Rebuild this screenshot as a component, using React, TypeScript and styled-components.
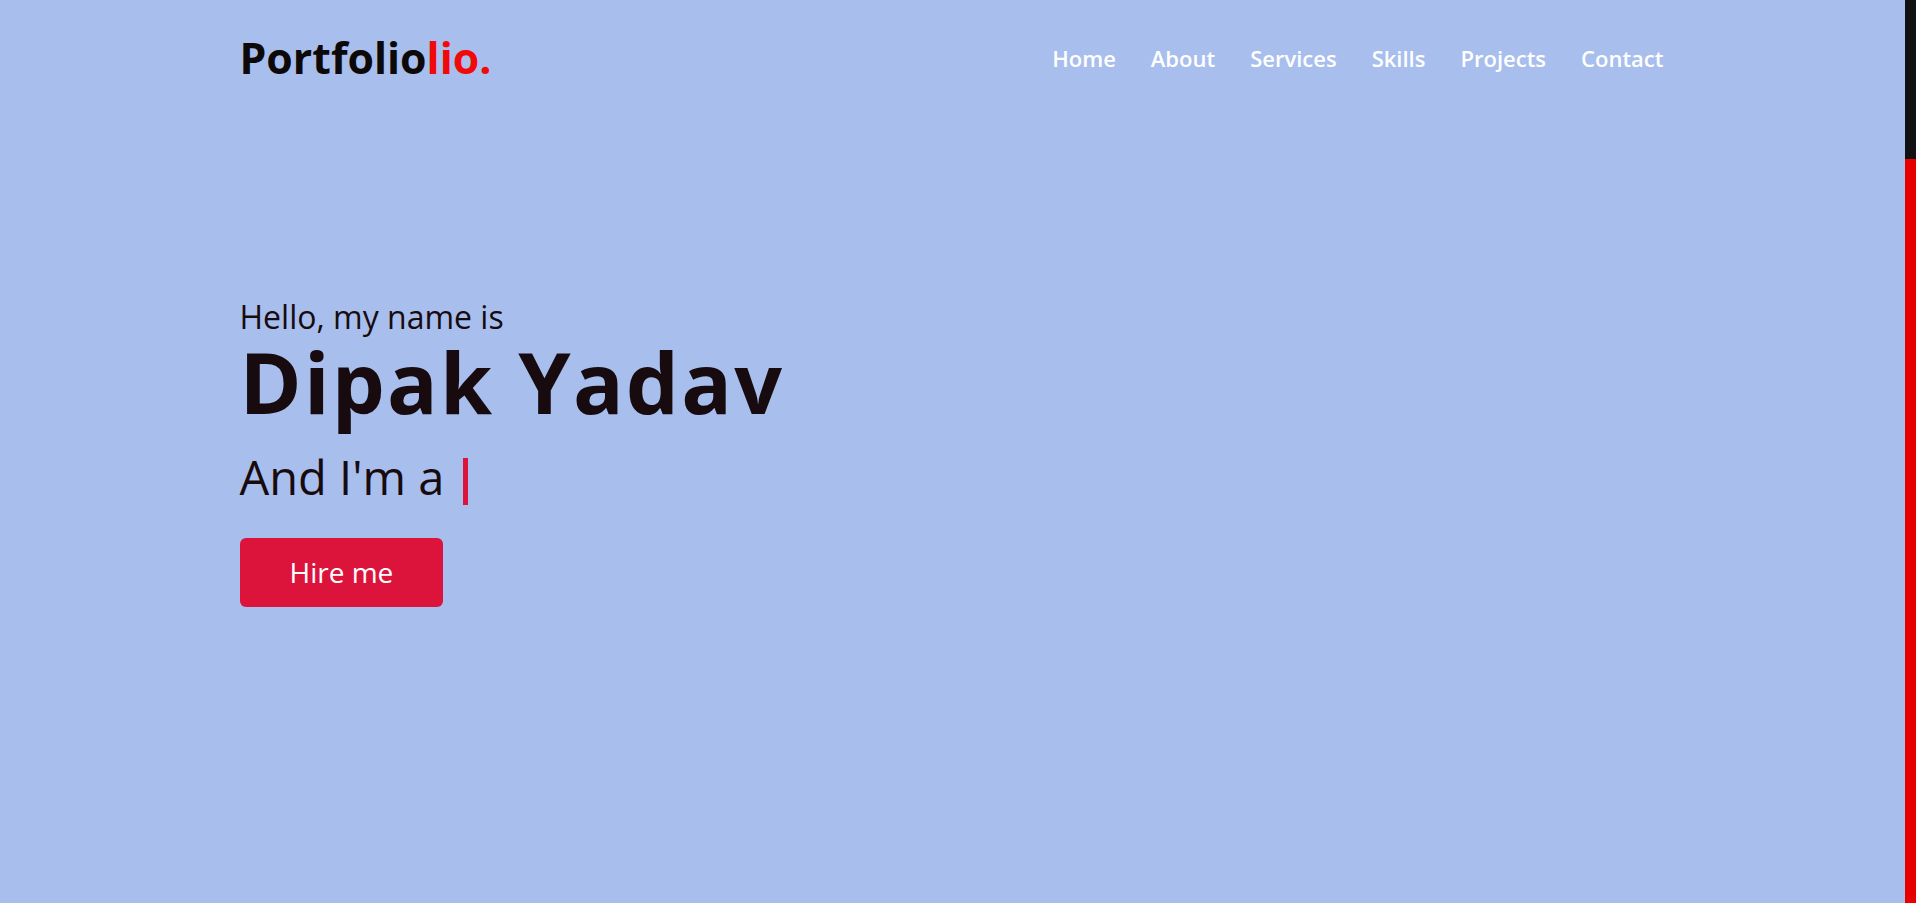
import React from "react";
import styled, { createGlobalStyle } from "styled-components";

const GlobalStyle = createGlobalStyle`
  * { margin: 0; padding: 0; box-sizing: border-box; }
  html, body { height: 100%; overflow: hidden; }
  body {
    font-family: "Open Sans", "Noto Sans", sans-serif;
    background: #a8beec;
  }
`;

const Shell = styled.div`
  display: grid;
  grid-template-columns: 1fr 11px;
  height: 100vh;
`;

const Main = styled.main`
  position: relative;
  min-width: 0;
`;

const ScrollTrack = styled.div`
  height: 100vh;
  background: #e60000;
`;

const ScrollThumb = styled.div`
  height: 159px;
  background: #111111;
`;

const Navbar = styled.nav`
  position: absolute;
  top: 0;
  left: 0;
  right: 0;
  z-index: 10;
  padding: 30px 0;
`;

const NavInner = styled.div`
  max-width: 1426px;
  margin: 0 auto;
  display: flex;
  align-items: center;
  justify-content: space-between;
`;

const Logo = styled.a`
  font-size: 42.8px;
  line-height: 56px;
  font-weight: 700;
  color: #0d0909;
  text-decoration: none;
`;

const LogoAccent = styled.span`
  color: #f00a0a;
`;

const Menu = styled.ul`
  list-style: none;
  display: flex;
  align-items: center;
  gap: 35px;
  margin-right: 2px;
`;

const MenuLink = styled.a`
  display: block;
  font-size: 22px;
  line-height: 30px;
  font-weight: 600;
  color: #ffffff;
  text-decoration: none;
`;

const Hero = styled.section`
  height: 100vh;
  display: flex;
  align-items: center;
`;

const HeroContent = styled.div`
  width: 100%;
  max-width: 1426px;
  margin: 0 auto;
  color: #170b10;
`;

const Greeting = styled.div`
  font-size: 32px;
  line-height: 40px;
  font-weight: 400;
`;

const Name = styled.h1`
  font-size: 84px;
  line-height: 90px;
  font-weight: 700;
  letter-spacing: 2.2px;
`;

const Role = styled.div`
  margin-top: 20px;
  font-size: 47px;
  line-height: 60px;
  font-weight: 400;
`;

const Cursor = styled.span`
  display: inline-block;
  width: 5px;
  height: 47px;
  margin-left: 19px;
  vertical-align: -10px;
  background: #dc143c;
`;

const HireButton = styled.a`
  display: inline-block;
  margin-top: 31px;
  padding: 0 50px;
  height: 69px;
  line-height: 69px;
  font-size: 28px;
  font-weight: 400;
  color: #ffffff;
  background: #dc143c;
  border-radius: 6px;
  text-decoration: none;
`;

const links = ["Home", "About", "Services", "Skills", "Projects", "Contact"];

export default function App() {
  return (
    <>
      <GlobalStyle />
      <Shell>
        <Main>
          <Navbar>
            <NavInner>
              <Logo href="#">
                Portfolio<LogoAccent>lio.</LogoAccent>
              </Logo>
              <Menu>
                {links.map((l) => (
                  <li key={l}>
                    <MenuLink href={`#${l.toLowerCase()}`}>{l}</MenuLink>
                  </li>
                ))}
              </Menu>
            </NavInner>
          </Navbar>
          <Hero id="home">
            <HeroContent>
              <Greeting>Hello, my name is</Greeting>
              <Name>Dipak Yadav</Name>
              <Role>
                And I'm a<Cursor />
              </Role>
              <HireButton href="#contact">Hire me</HireButton>
            </HeroContent>
          </Hero>
        </Main>
        <ScrollTrack>
          <ScrollThumb />
        </ScrollTrack>
      </Shell>
    </>
  );
}
